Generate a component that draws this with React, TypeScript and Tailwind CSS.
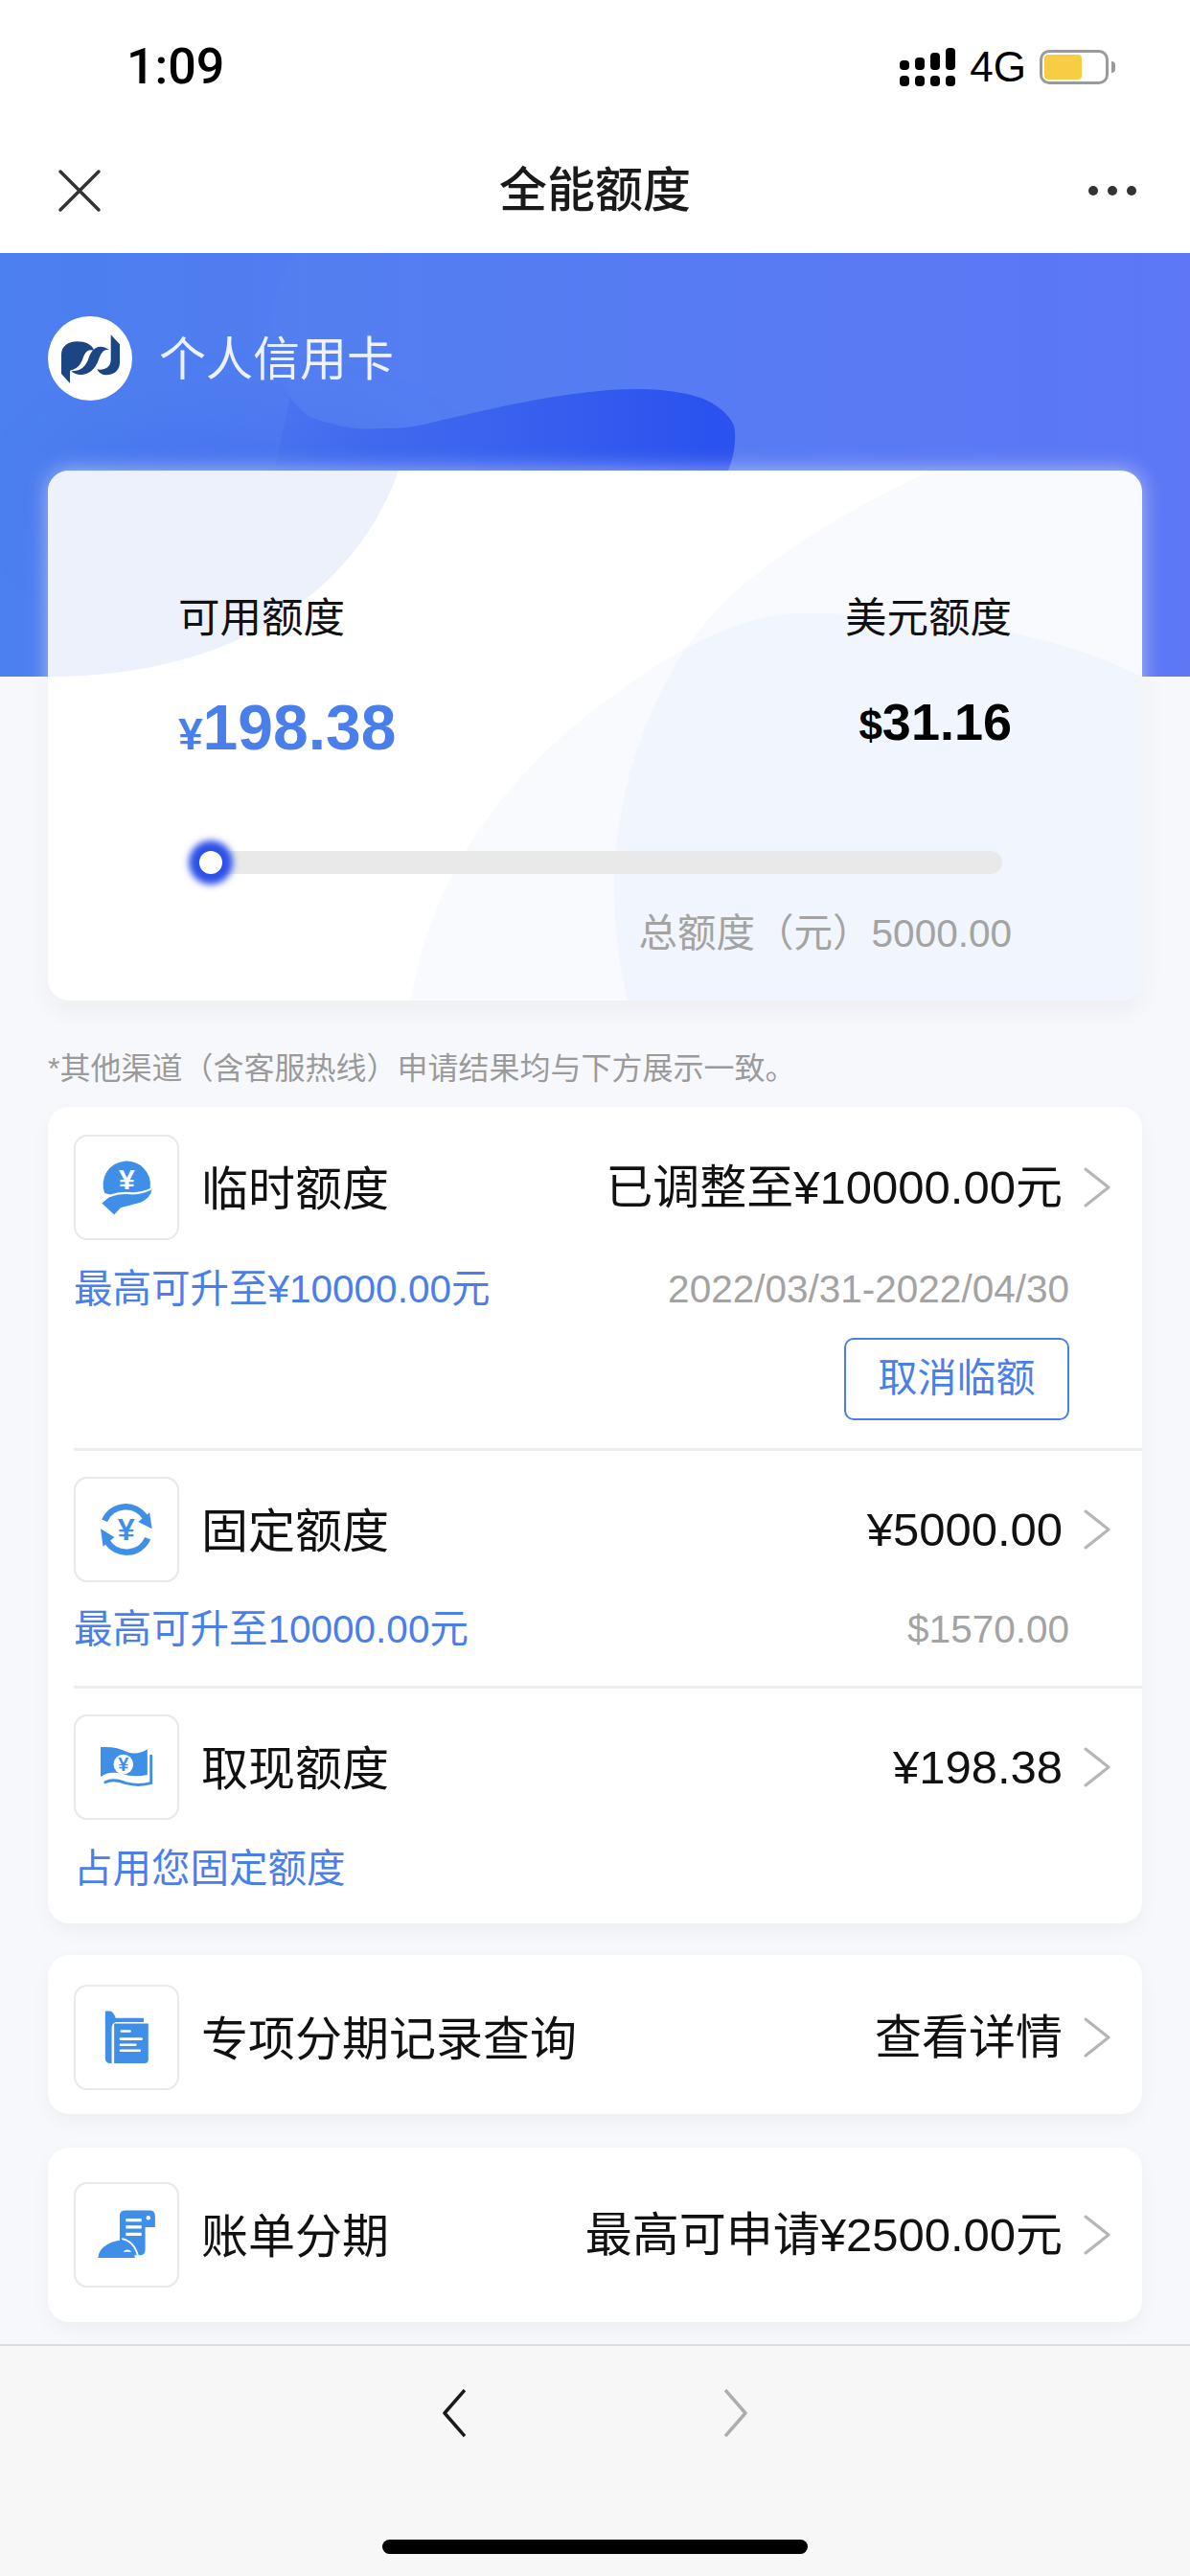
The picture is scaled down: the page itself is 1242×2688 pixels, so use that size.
import React from 'react';

const ICON_BLUE = '#3f8fe8';

const ChevronRight = ({ color = '#b5b5b5' }: { color?: string }) => (
  <svg width="30" height="44" viewBox="0 0 30 44" fill="none" className="shrink-0">
    <path d="M3 3 L27 22 L3 41" stroke={color} strokeWidth="3" strokeLinecap="round" strokeLinejoin="round" />
  </svg>
);

const LogoMark = () => (
  <svg viewBox="58 60 264 264" className="w-[88px] h-[88px]">
    <path
      fill="#1b4583"
      d="M127 270 L100 240 L100 180 C100 152 125 139 150 139 C175 139 196 148 203 168 C186 160 174 172 168 190 C160 215 148 226 127 230 Z"
    />
    <path
      fill="#1b4583"
      d="M131 232 C165 232 178 214 186 190 C194 165 215 140 251 166 C232 160 224 176 216 198 C207 224 186 244 160 243 C150 243 138 239 131 232 Z"
    />
    <path
      fill="#1b4583"
      d="M255 118 L283 148 L283 205 C283 232 262 244 240 244 C228 244 218 238 212 226 C232 230 255 222 255 196 Z"
    />
  </svg>
);

// Icons use the pixel grid of their own 330 unit square
const HandIcon = () => (
  <svg viewBox="82 72 330 330" className="w-full h-full">
    <path d="M176 256 A77 77 0 1 1 324 240 Q298 252 268 253 Q225 248 194 260 Q185 258 176 256 Z" fill={ICON_BLUE} />
    <text x="248" y="243" textAnchor="middle" fontSize="94" fontWeight="700" fill="#fff" fontFamily="Liberation Sans">¥</text>
    <path d="M167 288 L190 270 Q225 256 268 260 Q300 260 330 244 Q325 270 295 285 L228 303 L207 326 Z" fill={ICON_BLUE} />
  </svg>
);

const ExchangeIcon = () => (
  <svg viewBox="82 122 330 330" className="w-full h-full">
    <path d="M176 258 A75 75 0 0 1 308 248" fill="none" stroke={ICON_BLUE} strokeWidth="20" />
    <path d="M330 285 L285 262 L322 232 Z" fill={ICON_BLUE} />
    <path d="M316 316 A75 75 0 0 1 184 326" fill="none" stroke={ICON_BLUE} strokeWidth="20" />
    <path d="M163 285 L208 312 L171 342 Z" fill={ICON_BLUE} />
    <text x="246" y="322" textAnchor="middle" fontSize="100" fontWeight="700" fill={ICON_BLUE} fontFamily="Liberation Sans">¥</text>
  </svg>
);

const CashIcon = () => (
  <svg viewBox="82 868 330 330" className="w-full h-full">
    <path d="M163 968 Q212 964 250 984 Q285 995 315 975 L315 1058 Q270 1068 230 1054 Q190 1044 163 1064 Z" fill={ICON_BLUE} />
    <circle cx="237" cy="1024" r="32" fill="#fff" />
    <text x="237" y="1046" textAnchor="middle" fontSize="62" fontWeight="700" fill={ICON_BLUE} fontFamily="Liberation Sans">¥</text>
    <path d="M327 996 V1085 Q285 1096 245 1085 Q205 1068 178 1082" fill="none" stroke={ICON_BLUE} strokeWidth="9" strokeLinecap="round" />
  </svg>
);

const FolderIcon = () => (
  <svg viewBox="82 93 330 330" className="w-full h-full">
    <path d="M178 172 H194 Q205 174 212 195 H303 V208 H212 Q199 212 199 228 V342 H192 Q178 340 178 325 Z" fill={ICON_BLUE} />
    <path d="M207 213 H318 V330 Q318 342 305 342 H207 Z" fill={ICON_BLUE} />
    <g stroke="#fff" strokeWidth="8" strokeLinecap="round">
      <path d="M231 238 H258" />
      <path d="M228 263 H296" />
      <path d="M228 282 H276" />
      <path d="M228 301 H290" />
    </g>
  </svg>
);

const ScrollIcon = () => (
  <svg viewBox="82 712 330 330" className="w-full h-full">
    <path d="M225 815 Q225 798 245 798 H322 Q340 798 340 816 V852 H308 V925 Q308 943 290 943 H225 Z" fill={ICON_BLUE} />
    <circle cx="318" cy="822" r="7" fill="#fff" />
    <g stroke="#fff" strokeWidth="10">
      <path d="M245 829 H296" />
      <path d="M245 852 H296" />
      <path d="M245 875 H296" />
    </g>
    <path d="M155 952 Q155 925 185 908 Q210 895 232 895 Q262 898 275 952 Z" fill={ICON_BLUE} />
    <path d="M232 890 Q272 898 284 945" fill="none" stroke="#fff" strokeWidth="6" />
    <path d="M236 932 Q250 918 264 932 Z" fill="#fff" />
  </svg>
);

const IconBox = ({ children }: { children: React.ReactNode }) => (
  <div className="w-[110px] h-[110px] shrink-0 rounded-[14px] border-2 border-[#e9e9e9] bg-white overflow-hidden">{children}</div>
);

const Row = ({ icon, title, value }: { icon: React.ReactNode; title: string; value: string }) => (
  <div className="flex items-center">
    <IconBox>{icon}</IconBox>
    <span className="ml-[23px] pt-[3px] text-[49px] leading-[60px] text-[#111]">{title}</span>
    <span className="ml-auto text-[49px] leading-[60px] text-[#111]">{value}</span>
    <div className="ml-[21px] mr-[32px]">
      <ChevronRight />
    </div>
  </div>
);

const SubRow = ({ left, right }: { left: string; right?: string }) => (
  <div className="flex items-center justify-between pr-[76px] text-[40.5px] leading-[40px]">
    <span className="text-[#4a7eeb]">{left}</span>
    {right && <span className="text-[#a3a3a3]">{right}</span>}
  </div>
);

const SignalBars = () => (
  <div className="flex gap-[6px] items-end">
    {['h-[10px]', 'h-[13px]', 'h-[18px]', 'h-[23px]'].map((h) => (
      <div key={h} className="flex flex-col gap-[6px] w-[10px]">
        <div className={`${h} rounded-[4px] bg-black`} />
        <div className="h-[11px] rounded-[4px] bg-black" />
      </div>
    ))}
  </div>
);

export default function App() {
  return (
    <div className="relative w-[1242px] h-[2688px] flex flex-col bg-[#f7f8fc] overflow-hidden font-['Liberation_Sans','Noto_Sans_CJK_SC',sans-serif]">
      {/* Status bar */}
      <div className="h-[140px] bg-white flex items-center justify-between pl-[132px] pr-[78px]">
        <span className="font-['Roboto',sans-serif] font-medium text-[52px] text-black">1:09</span>
        <div className="flex items-center">
          <SignalBars />
          <span className="ml-[15px] text-[44px] leading-none text-black">4G</span>
          <div className="ml-[14px] w-[72px] h-[36px] rounded-[10px] border-[3px] border-[#9a9a9a] p-[2px]">
            <div className="w-[39px] h-full rounded-[4px] bg-[#f6cd45]" />
          </div>
          <div className="ml-[3px] w-[4px] h-[12px] rounded-r-full bg-[#9a9a9a]" />
        </div>
      </div>

      {/* Nav */}
      <div className="h-[124px] bg-white flex items-center justify-between pl-[60px] pr-[56px] pb-[6px]">
        <svg width="46" height="46" viewBox="0 0 46 46" fill="none">
          <path d="M3 3 L43 43 M43 3 L3 43" stroke="#333" strokeWidth="3.5" strokeLinecap="round" />
        </svg>
        <span className="text-[50px] font-medium text-[#1a1a1a]">全能额度</span>
        <div className="flex gap-[10px] w-[50px]">
          <div className="w-[10px] h-[10px] rounded-full bg-[#333]" />
          <div className="w-[10px] h-[10px] rounded-full bg-[#333]" />
          <div className="w-[10px] h-[10px] rounded-full bg-[#333]" />
        </div>
      </div>

      {/* Blue header */}
      <div className="relative h-[442px] shrink-0 bg-gradient-to-r from-[#4c7fef] to-[#5b75f5] pt-[66px] pl-[50px] overflow-hidden">
        <svg viewBox="0 0 1242 442" className="absolute inset-0 w-full h-full blur-2xl">
          <ellipse cx="250" cy="260" rx="190" ry="70" fill="#2f58ec" fillOpacity="0.28" />
        </svg>
        <svg viewBox="0 0 1242 442" className="absolute inset-0 w-full h-full">
          <defs>
            <linearGradient id="blob" gradientUnits="userSpaceOnUse" x1="240" x2="740" y1="0" y2="0">
              <stop offset="0" stopColor="#2f58ec" stopOpacity="0" />
              <stop offset="0.32" stopColor="#2f58ec" stopOpacity="0.5" />
              <stop offset="1" stopColor="#2a52ee" />
            </linearGradient>
          </defs>
          <path d="M240 442 L303 150 C315 170 330 175 347 178 C365 184 385 184 401 183 C420 183 435 181 450 177 C490 168 590 142 664 142 C700 142 725 148 736 153 C755 162 767 175 767 187 C768 200 765 215 760 227 L755 442 Z" fill="url(#blob)" />
          <path d="M309 0 C295 20 285 40 285 57 C283 75 283 85 285 100 C290 125 295 140 303 150 C315 170 330 175 347 178 C365 184 385 184 401 183 C420 183 435 181 450 177 C490 168 590 142 664 142 C700 142 725 148 736 153 C755 162 767 175 767 187 C768 200 765 215 760 227 L755 442 H1242 V0 Z" fill="#ffffff" fillOpacity="0.015" />
        </svg>
        <div className="relative flex items-center">
          <div className="w-[88px] h-[88px] rounded-full bg-white">
            <LogoMark />
          </div>
          <span className="ml-[28px] pt-[3px] text-[49px] text-white/90">个人信用卡</span>
        </div>
      </div>

      {/* Limit card */}
      <div className="relative mx-[50px] -mt-[215px] h-[553px] shrink-0 rounded-[22px] bg-white overflow-hidden flex flex-col px-[136px] shadow-[0_0_22px_rgba(255,255,255,0.55),0_10px_24px_rgba(0,0,0,0.06)]">
        <svg viewBox="0 0 1142 553" className="absolute inset-0 w-full h-full">
          <path d="M0 0 H366 C320 130 190 215 0 215 Z" fill="#ecf1fc" />
          <path d="M378 553 C390 490 410 440 437 395 C470 340 530 275 590 235 C650 190 720 149 790 149 C920 149 1060 170 1142 216 V553 Z" fill="#4a7eeb" fillOpacity="0.04" />
          <path d="M921 0 C860 30 800 60 733 113 C700 140 680 165 666 185 C625 249 600 320 592 400 C588 460 595 510 605 553 H1142 V0 Z" fill="#4a7eeb" fillOpacity="0.04" />
        </svg>
        <div className="relative flex flex-col h-full">
          <div className="flex justify-between pt-[132px] text-[43.5px] leading-[44px] text-[#111]">
            <span>可用额度</span>
            <span>美元额度</span>
          </div>
          <div className="flex justify-between items-start mt-[54px] font-bold">
            <span className="text-[#4a7eeb] text-[66px] leading-[76px]">
              <span className="text-[46px]">¥</span>198.38
            </span>
            <span className="text-black text-[54px] leading-[64px]">
              <span className="text-[44px]">$</span>31.16
            </span>
          </div>
          <div className="relative mt-[84px] h-[24px] rounded-full bg-[#e9e9e9] mr-[10px] ml-[24px] shrink-0">
            <div className="absolute left-[10px] top-[12px] -translate-x-1/2 -translate-y-1/2 w-[24px] h-[24px] rounded-full bg-white shadow-[0_0_7px_11px_#2d50e8]" />
          </div>
          <div className="mt-[40px] text-right text-[40.5px] leading-[44px] text-[#a3a3a3]">总额度（元）5000.00</div>
        </div>
      </div>

      <p className="mt-[51px] ml-[50px] text-[32px] leading-[40px] text-[#9a9a9a]">*其他渠道（含客服热线）申请结果均与下方展示一致。</p>

      {/* Limit list */}
      <div className="mt-[20px] mx-[50px] shrink-0 rounded-[22px] bg-white pl-[27px] pt-[29px] pb-[37px] shadow-[0_8px_20px_rgba(0,0,0,0.04)]">
        <Row icon={<HandIcon />} title="临时额度" value="已调整至¥10000.00元" />
        <div className="mt-[31px]">
          <SubRow left="最高可升至¥10000.00元" right="2022/03/31-2022/04/30" />
        </div>
        <div className="flex justify-end pr-[76px] mt-[31px]">
          <button className="w-[235px] h-[86px] rounded-[10px] border-2 border-[#4a7eeb] text-[41px] text-[#4a7eeb]">取消临额</button>
        </div>
        <div className="mt-[29px] h-[3px] bg-[#ededed]" />
        <div className="mt-[27px]">
          <Row icon={<ExchangeIcon />} title="固定额度" value="¥5000.00" />
        </div>
        <div className="mt-[29px]">
          <SubRow left="最高可升至10000.00元" right="$1570.00" />
        </div>
        <div className="mt-[39px] h-[3px] bg-[#ededed]" />
        <div className="mt-[27px]">
          <Row icon={<CashIcon />} title="取现额度" value="¥198.38" />
        </div>
        <div className="mt-[31px]">
          <SubRow left="占用您固定额度" />
        </div>
      </div>

      <div className="mt-[33px] mx-[50px] shrink-0 rounded-[22px] bg-white pl-[27px] pt-[31px] pb-[25px] shadow-[0_8px_20px_rgba(0,0,0,0.04)]">
        <Row icon={<FolderIcon />} title="专项分期记录查询" value="查看详情" />
      </div>

      <div className="mt-[35px] mx-[50px] shrink-0 rounded-[22px] bg-white pl-[27px] py-[36px] shadow-[0_8px_20px_rgba(0,0,0,0.04)]">
        <Row icon={<ScrollIcon />} title="账单分期" value="最高可申请¥2500.00元" />
      </div>

      {/* Browser bar */}
      <div className="mt-[23px] flex-1 border-t-2 border-[#dcdcdc] bg-[#f7f7f7] flex flex-col items-center pt-[45px]">
        <div className="flex gap-[270px]">
          <svg width="24" height="50" viewBox="0 0 24 50" fill="none">
            <path d="M23 1 L2 25 L23 49" stroke="#1a1a1a" strokeWidth="3.5" strokeLinejoin="round" />
          </svg>
          <svg width="24" height="50" viewBox="0 0 24 50" fill="none">
            <path d="M1 1 L22 25 L1 49" stroke="#adadad" strokeWidth="3.5" strokeLinejoin="round" />
          </svg>
        </div>
        <div className="mt-[107px] w-[444px] h-[15px] rounded-full bg-black" />
      </div>
    </div>
  );
}
